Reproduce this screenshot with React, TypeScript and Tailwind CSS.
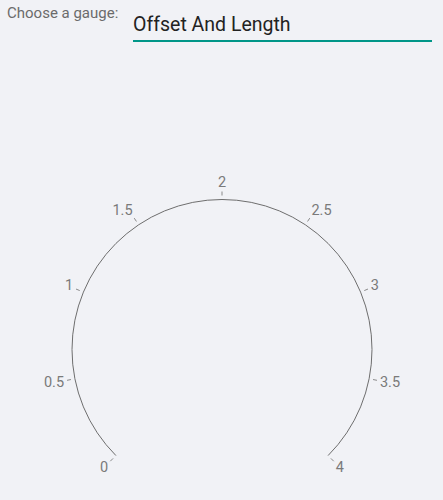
import { useMemo } from "react";

// Gauge geometry (svg coords, svg starts below the header)
const CX = 222;
const CY = 307.5;
const R = 150;
const START = 225;
const SWEEP = 270;
const MIN = 0;
const MAX = 4;

const ticks = [0, 0.5, 1, 1.5, 2, 2.5, 3, 3.5, 4];

const polar = (deg: number, r: number) => {
  const rad = (deg * Math.PI) / 180;
  return { x: CX + r * Math.cos(rad), y: CY - r * Math.sin(rad) };
};

const angleFor = (v: number) => START - ((v - MIN) / (MAX - MIN)) * SWEEP;

const Gauge = () => {
  const arc = useMemo(() => {
    const a = polar(START, R);
    const b = polar(START - SWEEP, R);
    return `M ${a.x} ${a.y} A ${R} ${R} 0 1 1 ${b.x} ${b.y}`;
  }, []);

  return (
    <svg width={443} height={458} className="block">
      <path d={arc} fill="none" stroke="#6e6e6e" strokeWidth={1} />
      {ticks.map((v) => {
        const deg = angleFor(v);
        const rad = (deg * Math.PI) / 180;
        const p1 = polar(deg, R + 4);
        const p2 = polar(deg, R + 8);
        // labels sit a bit further out vertically than horizontally
        const lx = CX + (R + 11) * Math.cos(rad);
        const ly = CY - (R + 17) * Math.sin(rad);
        const c = Math.cos(rad);
        const anchor = c > 0.1 ? "start" : c < -0.1 ? "end" : "middle";
        return (
          <g key={v}>
            <line x1={p1.x} y1={p1.y} x2={p2.x} y2={p2.y} stroke="#8a8a8a" strokeWidth={1} />
            <text
              x={lx}
              y={ly}
              textAnchor={anchor}
              dominantBaseline="central"
              fill="#7a7a7a"
              fontSize={14.5}
              fontFamily="Roboto, 'Liberation Sans', sans-serif"
            >
              {v}
            </text>
          </g>
        );
      })}
    </svg>
  );
};

export default function App() {
  return (
    <div className="w-[443px] h-[500px] bg-[#f1f2f6] overflow-hidden font-['Roboto','Liberation_Sans',sans-serif]">
      {/* Header with gauge picker */}
      <div className="flex items-start h-[42px]">
        <label className="w-[133px] pl-[7px] pt-[3px] text-[15px] leading-[20px] text-[#6b6b6b]">
          Choose a gauge:
        </label>
        <div className="w-[299px] h-[42px] border-b-2 border-[#009688] pt-[13px]">
          <span className="block text-[19.5px] leading-[24px] text-[#222]">Offset And Length</span>
        </div>
      </div>

      <Gauge />
    </div>
  );
}
